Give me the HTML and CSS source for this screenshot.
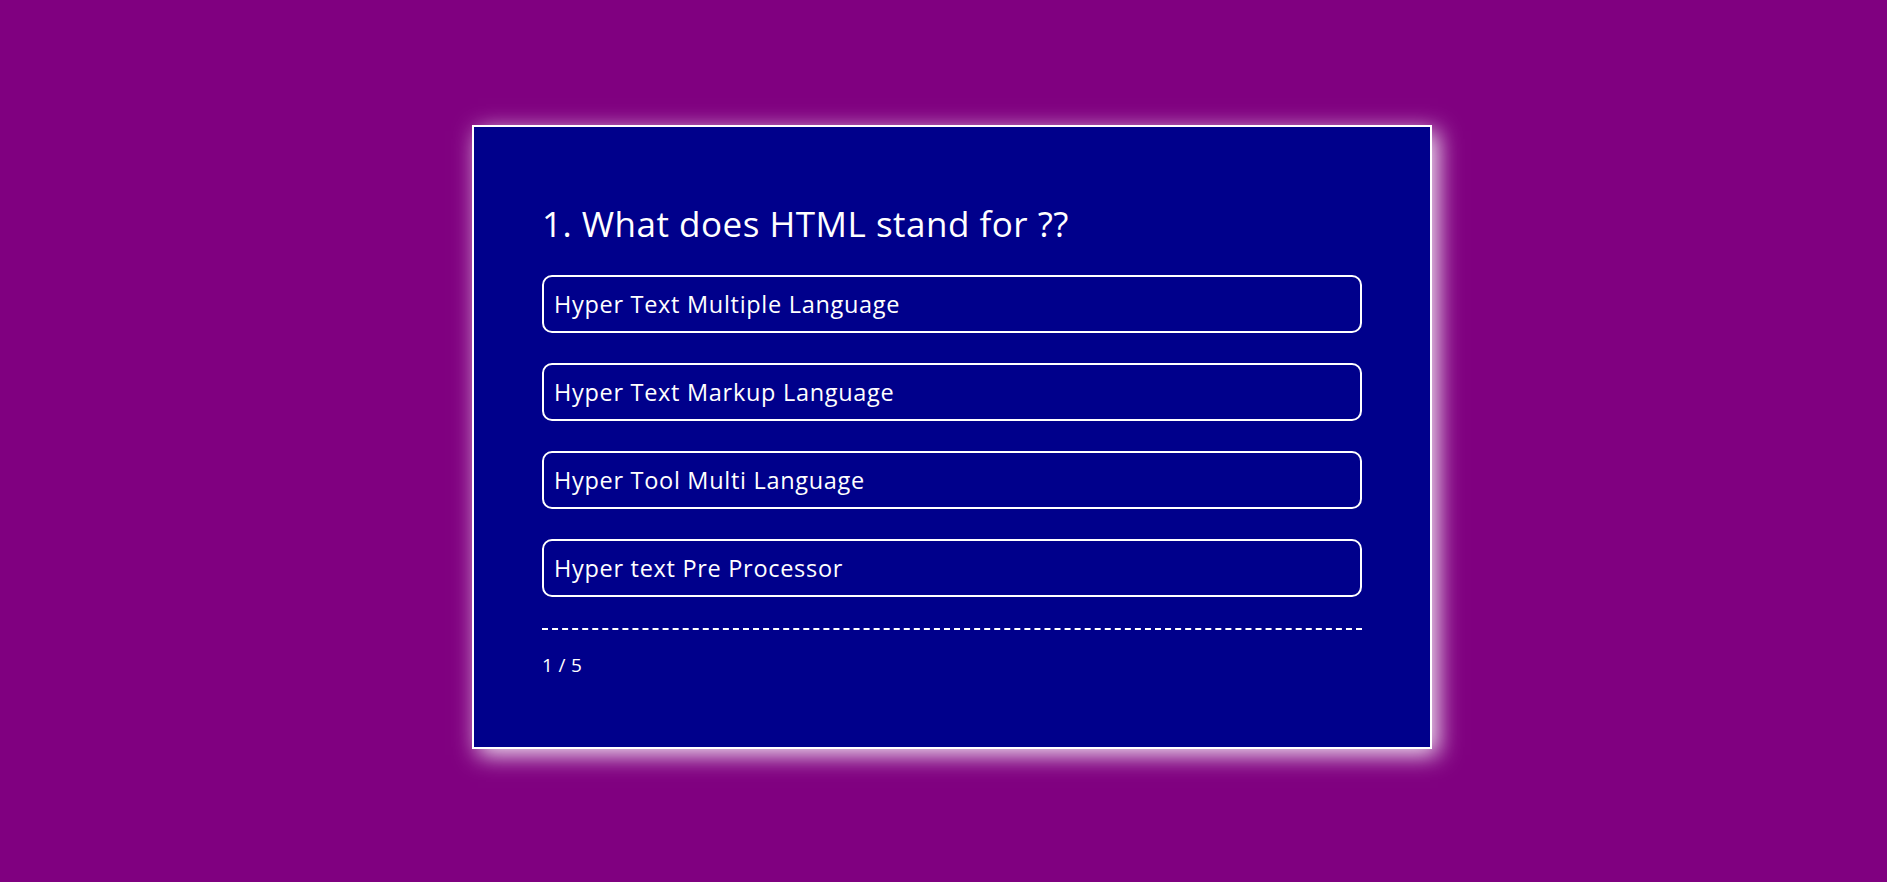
FILE: index.html
```html
<!DOCTYPE html>
<html lang="en">
<head>
<meta charset="utf-8">
<title>Quiz</title>
<link rel="stylesheet" href="styles.css">
</head>
<body>
<main class="page">
  <section class="quiz-card">
    <h2 class="question">1. What does HTML stand for ??</h2>
    <ul class="options">
      <li class="option">Hyper Text Multiple Language</li>
      <li class="option">Hyper Text Markup Language</li>
      <li class="option">Hyper Tool Multi Language</li>
      <li class="option">Hyper text Pre Processor</li>
    </ul>
    <footer class="quiz-footer">
      <span class="progress">1 / 5</span>
    </footer>
  </section>
</main>
</body>
</html>
```
FILE: styles.css
```css
html, body {
  margin: 0;
  padding: 0;
  height: 100%;
}
body {
  background: #800080;
  font-family: "Open Sans", "Noto Sans", sans-serif;
  color: #fff;
  overflow: hidden;
}
.page {
  display: flex;
  justify-content: center;
  padding: 125px 0 0 17px;
}
.quiz-card {
  box-sizing: border-box;
  width: 960px;
  height: 624px;
  background: #00008b;
  border: 2px solid #fff;
  box-shadow: 6px 6px 22px rgba(255, 255, 255, 0.9);
  padding: 70px 68px 0;
}
.question {
  margin: 0 0 24px;
  font-size: 35px;
  font-weight: 400;
  line-height: 54px;
  letter-spacing: 0.5px;
}
.options {
  list-style: none;
  margin: 0;
  padding: 0;
  display: flex;
  flex-direction: column;
  gap: 30px;
}
.option {
  box-sizing: border-box;
  height: 58px;
  display: flex;
  align-items: center;
  padding: 0 10px;
  border: 2px solid #fff;
  border-radius: 10px;
  font-size: 23.5px;
  letter-spacing: 0.7px;
}
.quiz-footer {
  margin-top: 31px;
  border-top: 2px dashed #fff;
  padding-top: 20px;
}
.progress {
  font-size: 19px;
  font-weight: 400;
  line-height: 30px;
  letter-spacing: 0.3px;
}
```
